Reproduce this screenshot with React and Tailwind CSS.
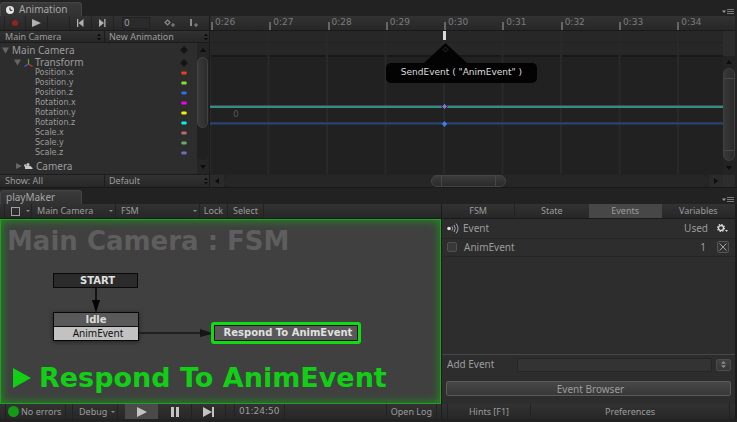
import React from "react";

const BAR = "bg-linear-to-b from-[#323232] to-[#272727]";
const TICKS = ["0:26", "0:27", "0:28", "0:29", "0:30", "0:31", "0:32", "0:33", "0:34"];
const GRID = [0, 1, 2, 3, 4, 5, 6, 7, 8].map((i) => (i * 1300) / 114 + "%");

const PROPERTIES = [
  ["Position.x", "#e8431a"],
  ["Position.y", "#86dd2c"],
  ["Position.z", "#2f6fe6"],
  ["Rotation.x", "#f000f0"],
  ["Rotation.y", "#f0f000"],
  ["Rotation.z", "#00f0f0"],
  ["Scale.x", "#b86a6a"],
  ["Scale.y", "#6aa868"],
  ["Scale.z", "#6d6dc4"],
];

function UpDown() {
  return (
    <svg className="pointer-events-none h-2 w-1 shrink-0" viewBox="0 0 4 8">
      <path d="M0 3 2 0.5 4 3ZM0 5 2 7.5 4 5Z" fill="#0c0c0c" />
    </svg>
  );
}

function Caret() {
  return (
    <svg className="pointer-events-none h-1 w-1 shrink-0" viewBox="0 0 4 4">
      <path d="M0 1H4L2 3Z" fill="#8a8a8a" />
    </svg>
  );
}

function Picker({ label, value, className, icon }) {
  return (
    <label className={"flex items-center " + className}>
      <select
        aria-label={label}
        className="h-full min-w-0 flex-1 appearance-none bg-transparent leading-3 outline-none"
      >
        <option>{value}</option>
      </select>
      {icon}
    </label>
  );
}

function IconButton({ label, className, children }) {
  return (
    <button aria-label={label} className={"flex shrink-0 items-center justify-center " + className}>
      {children}
    </button>
  );
}

function Arrow({ d, label, className }) {
  return (
    <IconButton label={label} className={className}>
      <svg className="size-[6px]" viewBox="0 0 6 6">
        <path d={d} fill="#0d0d0d" />
      </svg>
    </IconButton>
  );
}

function PaneMenu() {
  return (
    <IconButton label="Pane menu" className="mr-[3px] h-[9px] w-3">
      <svg className="h-[6px] w-3" viewBox="0 0 12 6">
        <path d="M0 1.5H4L2 4Z" fill="#999" />
        <path d="M5 .5H12M5 2.5H12M5 4.5H12" stroke="#777" />
      </svg>
    </IconButton>
  );
}

function PaneHeader({ title, icon, className }) {
  return (
    <div className={"flex items-end justify-between " + className}>
      <h2 className="flex h-[14px] w-[82px] items-center gap-[5px] rounded-t-[3px] border-t border-r border-l border-[#444] bg-linear-to-b from-[#3a3a3a] to-[#323232] pl-[5px] text-[10px] text-[#a6a6a6]">
        {icon}
        {title}
      </h2>
      <PaneMenu />
    </div>
  );
}

function KeyMark({ color = "#151515" }) {
  return (
    <svg className="mr-[9px] size-2" viewBox="0 0 8 8">
      <path d="M4 0 8 4 4 8 0 4Z" fill={color} />
    </svg>
  );
}

function AnimationSide() {
  return (
    <div className="flex w-[210px] shrink-0 flex-col border-r border-[#191919]">
      <div className={"flex h-[15px] items-stretch border-b border-[#1a1a1a] pl-1 " + BAR}>
        <IconButton label="Record" className="w-[22px] border-x border-[#222]">
          <span className="size-[6px] rounded-full bg-[#8f2422]" />
        </IconButton>
        <IconButton label="Play" className="w-[22px] border-r border-[#222]">
          <svg className="h-2 w-[9px]" viewBox="0 0 9 8">
            <path d="M0 0 9 4 0 8Z" fill="#b0b0b0" />
          </svg>
        </IconButton>
        <span className="w-[22px] border-r border-[#222]" />
        <IconButton label="Previous key" className="w-[22px] border-r border-[#222]">
          <svg className="h-2 w-[7px]" viewBox="0 0 7 8">
            <path d="M0 0H1.3V8H0ZM6.5 0V8L1.5 4Z" fill="#b0b0b0" />
          </svg>
        </IconButton>
        <IconButton label="Next key" className="w-[22px] border-r border-[#222]">
          <svg className="h-2 w-[7px]" viewBox="0 0 7 8">
            <path d="M5.2 0H6.5V8H5.2ZM0 0V8L5 4Z" fill="#b0b0b0" />
          </svg>
        </IconButton>
        <input
          aria-label="Frame"
          defaultValue="0"
          className="mx-2 my-px w-7 border border-[#222] bg-[#2b2b2b] pl-px font-['DejaVu_Sans',sans-serif] text-[9px] leading-3 outline-none"
        />
        <IconButton label="Add keyframe" className="w-6">
          <svg className="h-2 w-3" viewBox="0 0 12 8">
            <path d="M3.500 1 6 3.500 3.500 6 1 3.500Z" fill="none" stroke="#8a8a8a" strokeWidth="1.200" />
            <path d="M7 6H11M9 4V8" stroke="#8a8a8a" />
          </svg>
        </IconButton>
        <IconButton label="Add event" className="w-6">
          <svg className="h-2 w-[9px]" viewBox="0 0 9 8">
            <path d="M0 0H2V7H0Z" fill="#8a8a8a" />
            <path d="M4 6H8M6 4V8" stroke="#8a8a8a" />
          </svg>
        </IconButton>
      </div>
      <div className={"flex h-[12px] border-b border-[#1c1c1c] text-[9px] " + BAR}>
        <Picker label="Object" value="Main Camera" className="w-[105px] border-r border-[#1c1c1c] pr-[3px] pl-[5px]" icon={<UpDown />} />
        <Picker label="Clip" value="New Animation" className="flex-1 pr-px pl-1" icon={<UpDown />} />
      </div>
      <div className="flex bg-[#2d2d2d]">
        <ul className="flex-1 pb-px">
          <li className="flex h-[14px] items-center text-[10px]">
            <button aria-label="Collapse Main Camera" className="mr-[3px] ml-[2px]">
              <svg className="size-[7px]" viewBox="0 0 7 7"><path d="M0 .5H7L3.500 6.500Z" fill="#666" /></svg>
            </button>
            <span className="flex-1">Main Camera</span>
            <KeyMark />
          </li>
          <li className="flex h-[11px] items-center text-[10px]">
            <button aria-label="Collapse Transform" className="mr-[3px] ml-[14px]">
              <svg className="size-[7px]" viewBox="0 0 7 7"><path d="M0 .5H7L3.500 6.500Z" fill="#666" /></svg>
            </button>
            <svg className="mr-[2px] h-2 w-[9px]" viewBox="0 0 9 8" fill="none" strokeWidth="1.300">
              <path d="M4.500 5V0" stroke="#5aa02c" />
              <path d="M4.500 5 .5 7.500" stroke="#3a5fd0" />
              <path d="M4.500 5 8.500 7.500" stroke="#c03a2a" />
            </svg>
            <span className="flex-1">Transform</span>
            <KeyMark />
          </li>
          {PROPERTIES.map(([name, color]) => (
            <li key={name} className="flex h-[10px] items-center pl-[35px] font-['DejaVu_Sans',sans-serif] text-[8px] leading-[10px]">
              <span className="flex-1">{name}</span>
              <svg className="mr-[10px] h-1 w-[6px]" viewBox="0 0 6 4">
                <path d="M1 .5H5L6 2 5 3.500H1L0 2Z" fill={color} />
              </svg>
            </li>
          ))}
          <li className="flex h-[15px] items-center pt-px text-[10px]">
            <button aria-label="Expand Camera" className="mr-[2px] ml-[16px]">
              <svg className="size-[6px]" viewBox="0 0 6 6"><path d="M0 0 6 3 0 6Z" fill="#666" /></svg>
            </button>
            <svg className="mr-[3px] h-[6px] w-[9px]" viewBox="0 0 9 6" fill="#c8c8c8">
              <circle cx="4" cy="1.500" r="1.500" />
              <circle cx="1.300" cy="2.500" r="1.200" />
              <path d="M1 3H6.500L8.500 5V6H1Z" />
            </svg>
            <span>Camera</span>
          </li>
        </ul>
        <div className="flex w-[12px] flex-col items-stretch bg-[#252525] pr-px">
          <Arrow label="Scroll up" d="M0 5 3 1 6 5Z" className="h-[14px]" />
          <div className="flex-1 rounded-full bg-[#202020]">
            <div className="h-[71px] rounded-full border border-[#444] bg-linear-to-r from-[#393939] to-[#2c2c2c]" />
          </div>
          <Arrow label="Scroll down" d="M0 1 3 5 6 1Z" className="h-[14px]" />
        </div>
      </div>
      <div className={"flex h-[13px] border-t border-[#1c1c1c] text-[9px] " + BAR}>
        <button className="w-[105px] border-r border-[#1c1c1c] pl-[5px] text-left leading-3">Show: All</button>
        <Picker label="Wrap mode" value="Default" className="flex-1 pr-px pl-1" icon={<UpDown />} />
      </div>
    </div>
  );
}

function Timeline() {
  return (
    <div className="flex min-w-0 flex-1 flex-col pr-[2px]">
      <div className={"h-[15px] border-b border-[#1a1a1a] pr-[13px] pl-px leading-3 text-[#7c7c7c] " + BAR}>
        <div className="grid h-full grid-cols-[repeat(8,13fr)_10fr] font-['DejaVu_Sans',sans-serif] text-[9px]">
          {TICKS.map((t) => (
            <div key={t} className="flex h-full items-start">
              <span className="h-2 w-[2px] self-end bg-[#666]" />
              <span className="pl-[2px]">{t}</span>
            </div>
          ))}
        </div>
      </div>
      <div className="flex min-h-0 flex-1">
        <div className="relative min-w-0 flex-1 bg-[#212121]">
          <svg className="absolute inset-0 h-full w-full">
            <rect width="100%" height="25" fill="#272727" />
            <path d="M0 11.500H2000" stroke="#222" />
            <path d="M0 25H2000" stroke="#191919" strokeWidth="2" />
            {GRID.map((x) => (
              <line key={x} x1={x} x2={x} y1="0" y2="100%" stroke="#292929" strokeWidth="2" />
            ))}
            <path d="M0 74.500H2000" stroke="#4d3f5c" />
            <path d="M0 76H2000" stroke="#2f9180" strokeWidth="2" />
            <path d="M0 91.500H2000" stroke="#3a2a20" />
            <path d="M0 92.500H2000" stroke="#24467f" strokeWidth="2" />
            <svg x={GRID[4]} className="overflow-visible">
              <path d="M.5 72.500 3.500 75.500.5 78.500-2.500 75.500Z" fill="#8a6cd0" stroke="#1c2b38" />
              <path d="M.5 90 3 93 .5 96-2 93Z" fill="#3d7ff0" />
              <rect x="-1" width="3" height="9" y="0" fill="#d8d8d8" />
            </svg>
            <text x="23" y="86" fill="#555" className="font-['DejaVu_Sans',sans-serif] text-[9px]">0</text>
          </svg>
          <div className="absolute top-[12px] left-[45.61%] w-0">
            <div className="relative -left-[58px] w-max">
              <svg className="ml-[38px] h-[20px] w-[43px]" viewBox="0 0 43 20">
                <path d="M21.500 0 43 20H0Z" fill="#030303" />
                <path d="M21.500 4 24 6.500 21.500 9 19 6.500Z" fill="none" stroke="#2a2a2a" />
              </svg>
              <div role="tooltip" className="flex h-[20px] w-[151px] items-center justify-center rounded-[5px] bg-[#030303] font-['DejaVu_Sans',sans-serif] text-[9px] text-[#dedede]">
                SendEvent ( "AnimEvent" )
              </div>
            </div>
          </div>
        </div>
        <div className="flex w-3 flex-col bg-[#232323]">
          <div className="h-[25px] bg-[#2d2d2d]" />
          <Arrow label="Scroll curves up" d="M0 5 3 1 6 5Z" className="h-[12px]" />
          <div className="flex-1 rounded-full border border-[#3f3f3f] bg-linear-to-r from-[#383838] to-[#2a2a2a] py-[9px]">
            <div className="h-full border-y border-[#474747]" />
          </div>
          <Arrow label="Scroll curves down" d="M0 1 3 5 6 1Z" className="h-[13px]" />
        </div>
      </div>
      <div className="flex h-[13px] bg-[#232323] pt-px">
        <Arrow label="Scroll left" d="M5 0 1 3 5 6Z" className="w-[14px] bg-[#2a2a2a]" />
        <div className="grid flex-1 grid-cols-[206fr_75fr_202fr] rounded-full bg-[#262626]">
          <div />
          <div className="rounded-full border border-[#454545] bg-linear-to-b from-[#3c3c3c] to-[#2b2b2b] px-[9px]">
            <div className="h-full border-x border-[#474747]" />
          </div>
          <div />
        </div>
        <Arrow label="Scroll right" d="M1 0 5 3 1 6Z" className="w-[14px] bg-[#2a2a2a]" />
        <div className="w-3 bg-[#2d2d2d]" />
      </div>
    </div>
  );
}

function StateGraph() {
  return (
    <div className="relative flex flex-1 flex-col justify-between border border-[#22a022] bg-[#404040] font-['DejaVu_Sans',sans-serif] font-bold shadow-[inset_0_0_8px_1px_#1f8a1f]">
      <h1 className="pt-[5px] pl-[6px] text-[26px] leading-8 text-[#5e5e5e]">Main Camera : FSM</h1>
      <svg className="absolute top-px left-px h-[140px] w-[220px]" viewBox="0 0 220 140">
        <path d="M94 66V84" stroke="#050505" strokeWidth="1.500" />
        <path d="M90 79H98L94 92Z" fill="#050505" />
        <path d="M136 112H200" stroke="#161616" strokeWidth="1.500" />
        <path d="M198 108 212 112.500 198 116Z" fill="#161616" />
      </svg>
      <button className="absolute top-[53px] left-[52px] h-[15px] w-[85px] border border-[#080808] bg-[#2b2b2b] pl-1 text-center text-[10px] leading-3 text-[#e0e0e0]">START</button>
      <div className="absolute top-[92px] left-[52px] w-[86px] border border-[#080808] text-center text-[10px] shadow-[0_1px_4px_#222]">
        <div className="h-[14px] border-b border-[#111] bg-[#595959] leading-[14px] text-[#dcdcdc]">Idle</div>
        <div className="h-[13px] bg-[#c2c2c2] pl-1 font-['Noto_Sans',sans-serif] leading-[13px] font-normal text-[#111]">AnimEvent</div>
      </div>
      <div className="absolute top-[102px] left-[210px] h-[22px] w-[150px] rounded-[3px] border-[3px] border-[#0fdd12] bg-[#101010] p-px text-center text-[10px] text-[#e0e0e0]">
        <div className="h-full bg-[#595959] pl-1 leading-[14px]">Respond To AnimEvent</div>
      </div>
      <p className="flex items-center gap-2 pb-[9px] pl-3 text-[27px] leading-8 text-[#10cf14]">
        <svg className="h-[20px] w-[18px]" viewBox="0 0 18 20"><path d="M0 0 18 10 0 20Z" fill="#10cf14" /></svg>
        Respond To AnimEvent
      </p>
    </div>
  );
}

function FsmSide() {
  return (
    <div className="flex min-w-0 flex-1 flex-col">
      <div className={"flex h-[15px] items-stretch border-b border-[#1a1a1a] pl-1 text-[9px] " + BAR}>
        <button aria-label="Layout" className="flex w-[28px] items-center gap-[6px] border-x border-[#222] pl-[6px]">
          <span className="size-[9px] border border-[#a0a0a0]" />
          <Caret />
        </button>
        <Picker label="FSM object" value="Main Camera" className="w-[84px] border-r border-[#222] pr-[2px] pl-[5px]" icon={<Caret />} />
        <Picker label="FSM" value="FSM" className="w-[84px] border-r border-[#222] pr-[2px] pl-[5px]" icon={<Caret />} />
        <button className="w-[28px] border-r border-[#222]">Lock</button>
        <button className="w-[36px] border-r border-[#222]">Select</button>
      </div>
      <StateGraph />
      <div className={"flex h-[15px] items-stretch pl-[5px] text-[9px] " + BAR}>
        <button className="flex w-[61px] items-center gap-[2px] border-x border-[#222] pl-[2px]">
          <span className="size-[11px] rounded-full bg-[#149a14]" />
          <span>No errors</span>
        </button>
        <Picker label="Debug" value="Debug" className="ml-[6px] w-[46px] border-x border-[#222] pr-[2px] pl-[6px]" icon={<Caret />} />
        <IconButton label="Play" className="ml-[7px] w-[33px] bg-[#4a4a4a]">
          <svg className="h-[10px] w-[10px]" viewBox="0 0 10 10"><path d="M0 0 10 5 0 10Z" fill="#c4c4c4" /></svg>
        </IconButton>
        <IconButton label="Pause" className="w-[34px] border-r border-[#222]">
          <svg className="h-[10px] w-2" viewBox="0 0 8 10"><path d="M0 0H3V10H0ZM5 0H8V10H5Z" fill="#c4c4c4" /></svg>
        </IconButton>
        <IconButton label="Step" className="w-[34px] border-r border-[#222]">
          <svg className="h-[10px] w-[11px]" viewBox="0 0 11 10"><path d="M0 0 9 5 0 10ZM9 0H11V10H9Z" fill="#c4c4c4" /></svg>
        </IconButton>
        <time className="ml-2 w-[51px] border-x border-[#222] pl-1 font-['DejaVu_Sans',sans-serif] leading-[15px]">01:24:50</time>
        <button className="mr-1 ml-auto border-x border-[#222] px-1">Open Log</button>
      </div>
    </div>
  );
}

function Inspector() {
  return (
    <div className="flex w-[296px] shrink-0 flex-col border-r-2 border-l border-[#1c1c1c]">
      <nav className={"grid h-[15px] grid-cols-4 border-b border-[#1a1a1a] text-[9px] " + BAR}>
        <button className="border-r border-[#222]">FSM</button>
        <button>State</button>
        <button className="bg-[#474747]">Events</button>
        <button>Variables</button>
      </nav>
      <div className="flex flex-1 flex-col bg-[#2d2d2d] text-[10px]">
        <table className="w-full">
          <thead>
            <tr className="h-[19px] border-b border-[#262626]">
              <th className="w-[21px] pl-[5px]" aria-label="Broadcast">
                <svg className="h-[11px] w-3" viewBox="0 0 12 11" fill="none" stroke="#a8a8a8">
                  <circle cx="2" cy="5.500" r="1.800" fill="#e0e0e0" stroke="none" />
                  <path d="M5 3.500Q6.500 5.500 5 7.500M7 2Q9.500 5.500 7 9M9 .5Q13 5.500 9 10.500" />
                </svg>
              </th>
              <th className="text-left font-normal">Event</th>
              <th className="w-14 pr-[9px] text-right font-normal">Used</th>
              <th className="w-[18px]">
                <button aria-label="Settings" className="block">
                  <svg className="h-[9px] w-[11px]" viewBox="0 0 11 9">
                    <circle cx="4" cy="4" r="2.500" fill="none" stroke="#d8d8d8" strokeWidth="1.400" />
                    <circle cx="4" cy="4" r="3.500" fill="none" stroke="#d8d8d8" strokeWidth="1.200" strokeDasharray="1.370 1.370" />
                    <path d="M8 6H11L9.500 8Z" fill="#d8d8d8" />
                  </svg>
                </button>
              </th>
            </tr>
          </thead>
          <tbody>
            <tr className="h-[18px] border-b border-[#262626]">
              <td className="pl-[5px]">
                <input type="checkbox" aria-label="Select AnimEvent" className="block size-[10px] appearance-none rounded-[2px] border border-[#505050] bg-[#393939]" />
              </td>
              <td className="pl-px">AnimEvent</td>
              <td className="pr-[11px] text-right">1</td>
              <td>
                <button aria-label="Delete AnimEvent" className="flex size-3 items-center justify-center rounded-[2px] border border-[#555] bg-[#333]">
                  <svg className="size-2" viewBox="0 0 8 8"><path d="M.5.5 7.500 7.500M7.500.5.5 7.500" stroke="#a0a0a0" /></svg>
                </button>
              </td>
            </tr>
          </tbody>
        </table>
        <div className="mt-auto flex items-center border-t border-[#474747] pt-[2px] pr-1 pl-[5px]">
          <label htmlFor="add-event" className="w-[70px]">Add Event</label>
          <input id="add-event" className="h-[14px] min-w-0 flex-1 border border-[#262626] bg-[#333] px-1 outline-none" />
          <IconButton label="Choose event" className="ml-1 h-3 w-[15px] rounded-[2px] border border-[#4c4c4c] bg-linear-to-b from-[#424242] to-[#363636]">
            <svg className="h-[7px] w-[5px]" viewBox="0 0 5 7"><path d="M0 2.800 2.500 0 5 2.800ZM0 4.200 2.500 7 5 4.200Z" fill="#8c8c8c" /></svg>
          </IconButton>
        </div>
        <button className="mx-1 mt-[9px] mb-2 h-[15px] rounded-[2px] border border-[#5a5a5a] bg-linear-to-b from-[#474747] to-[#383838] pl-1 leading-3">Event Browser</button>
      </div>
      <div className={"flex h-[15px] px-[5px] text-[9px] " + BAR}>
        <button className="w-[84px] border-x border-[#222]">Hints [F1]</button>
        <button className="flex-1 border-r border-[#222]">Preferences</button>
      </div>
    </div>
  );
}

export default function App() {
  return (
    <main className="flex min-h-screen flex-col bg-[#222] pb-[3px] font-['Noto_Sans',sans-serif] text-[#9c9c9c]">
      <section>
        <PaneHeader
          title="Animation"
          className="pt-[2px]"
          icon={
            <svg className="size-2" viewBox="0 0 8 8">
              <circle cx="4" cy="4" r="4" fill="#e4e4e4" />
              <path d="M4 1.500V4.300H6.300" fill="none" stroke="#222" />
            </svg>
          }
        />
        <div className="flex">
          <AnimationSide />
          <Timeline />
        </div>
      </section>
      <section className="flex flex-1 flex-col border-t border-[#181818]">
        <PaneHeader title="playMaker" className="pt-[2px]" />
        <div className="flex flex-1">
          <FsmSide />
          <Inspector />
        </div>
      </section>
    </main>
  );
}
